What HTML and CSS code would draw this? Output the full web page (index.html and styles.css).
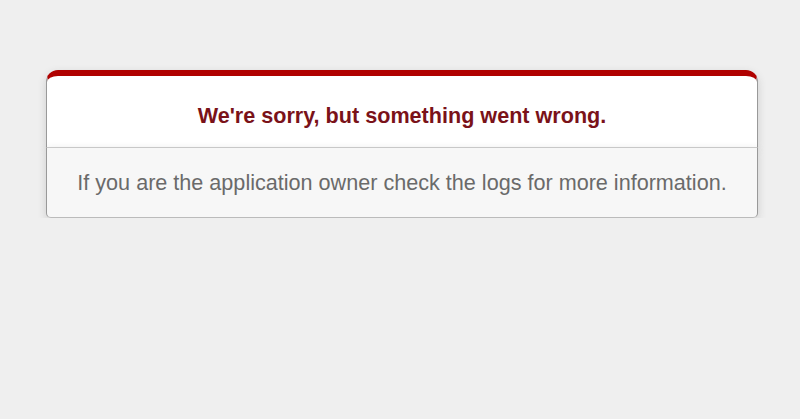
FILE: index.html
```html
<!DOCTYPE html>
<html lang="en">
  <head>
    <meta charset="UTF-8" />
    <title>We're sorry, but something went wrong (500)</title>
    <link rel="stylesheet" href="styles.css">
  </head>
  <body>
    <div class="dialog">
      <div class="dialog-head">
        <h1>We're sorry, but something went wrong.</h1>
      </div>
      <p>If you are the application owner check the logs for more information.</p>
    </div>
  </body>
</html>
```

FILE: styles.css
```css
/* page */
* {
  box-sizing: border-box;
}
body {
  background-color: #efefef;
  color: #2e2f30;
  text-align: center;
  font-family: "Liberation Sans", Arial, sans-serif;
  margin: 0;
  padding-left: 4px;
}
/* dialog */
.dialog {
  width: 712px;
  margin: 70px auto 0;
}
.dialog-head {
  border: 1px solid #ccc;
  border-right-color: #999;
  border-left-color: #999;
  border-bottom: none;
  border-top: #b00100 solid 6px;
  border-top-left-radius: 12px;
  border-top-right-radius: 12px;
  background-color: #fff;
  height: 77px;
  display: flex;
  align-items: center;
  justify-content: center;
  box-shadow: 0 3px 8px rgba(50, 50, 50, 0.17);
}
h1 {
  font-size: 21.6px;
  color: #7a1219;
  margin: 0;
  padding-top: 8px;
}
.dialog > p {
  margin: 0;
  height: 71px;
  display: flex;
  align-items: center;
  justify-content: center;
  font-size: 21.6px;
  background-color: #f7f7f7;
  border: 1px solid #ccc;
  border-right-color: #999;
  border-left-color: #999;
  border-bottom-color: #bbb;
  border-top-color: #c8c8c8;
  border-bottom-left-radius: 5px;
  border-bottom-right-radius: 5px;
  color: #6a6a6a;
  box-shadow: 0 3px 8px rgba(50, 50, 50, 0.17);
}
```
